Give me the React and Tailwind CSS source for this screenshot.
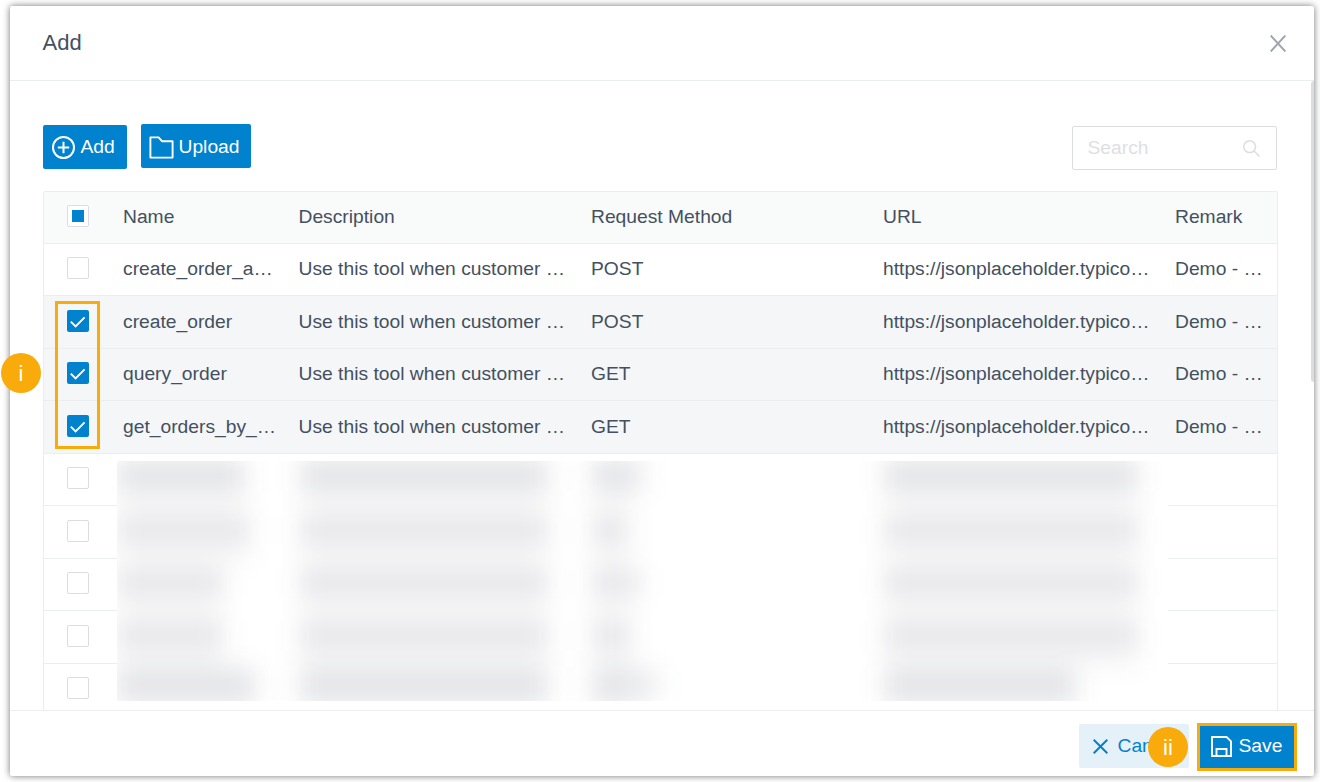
const columns = ["Name", "Description", "Request Method", "URL", "Remark"];

const tools = [
  { name: "create_order_a…", method: "POST", checked: false },
  { name: "create_order", method: "POST", checked: true },
  { name: "query_order", method: "GET", checked: true },
  { name: "get_orders_by_…", method: "GET", checked: true },
];

const description = "Use this tool when customer …";
const url = "https://jsonplaceholder.typico…";
const remark = "Demo - …";

// widths of the redacted name, method and url cells
const redacted = [
  [128, 52, 254],
  [132, 34, 254],
  [106, 50, 254],
  [106, 38, 254],
  [138, 66, 192],
];

const gridCols = "grid grid-cols-[65px_175.5px_292.5px_292px_292px_1fr]";
const rowSize = "odd:h-[52px] odd:pb-[3px] even:h-[53px] even:pb-[2px]";

function Checkbox({ state }) {
  if (state === "checked") {
    return (
      <span className="flex size-[22px] items-center justify-center rounded-[2px] bg-[#0082cf]">
        <svg viewBox="0 0 22 22" className="size-[22px]" fill="none" stroke="#fff" strokeWidth="1.9">
          <path d="M3.8 11.6 8.6 16.4 17.6 7.4" />
        </svg>
      </span>
    );
  }
  return (
    <span className="flex size-[22px] items-center justify-center rounded-[2px] border border-[#dcdde1] bg-white">
      {state === "partial" && <span className="size-3 bg-[#0082cf]" />}
    </span>
  );
}

function Row({ cells, state, className }) {
  return (
    <div className={`${gridCols} items-center border-b border-[#ebeeef] ${className}`}>
      <div className="pl-[23px]">
        <Checkbox state={state} />
      </div>
      {cells.map((cell, i) => (
        <div key={i} className="pt-0.5 pl-[14px] leading-6 whitespace-nowrap">
          {cell}
        </div>
      ))}
    </div>
  );
}

function Redaction() {
  return (
    <div className="absolute top-[269px] left-[73px] h-60 w-[1051px] overflow-hidden bg-white">
      <div className="-mt-1.5 blur-[12px]">
        {redacted.map(([name, method, link], i) => {
          const bar = i === 0 || i === 4 ? "h-[33px] bg-[#31374a]/9" : "mt-1.5 h-[27px] bg-[#31374a]/8";
          return (
            <div key={i} className="grid h-[52.5px] grid-cols-[183px_292px_292px_1fr] items-start pt-[3px]">
              <div className="flow-root h-[52.5px] bg-[#31374a]/4" style={{ width: name }}>
                <div className={bar} />
              </div>
              <div className="flow-root h-[52.5px] w-[248px] bg-[#31374a]/4">
                <div className={bar} />
              </div>
              <div className="flow-root h-[52.5px] w-10 bg-[#31374a]/4">
                <div className={bar} style={{ width: method }} />
              </div>
              <div className="flow-root h-[52.5px] bg-[#31374a]/4" style={{ width: link }}>
                <div className={bar} />
              </div>
            </div>
          );
        })}
      </div>
    </div>
  );
}

function Step({ children, className }) {
  return (
    <span
      className={`absolute flex size-10 items-center justify-center rounded-full bg-[#f9ab0b] text-[22px] text-white ${className}`}
    >
      {children}
    </span>
  );
}

export default function App() {
  return (
    <div className="h-[782px] w-[1320px] overflow-hidden bg-white pt-1.5 pl-2.5 font-['Liberation_Sans',Arial,sans-serif] text-[19.25px] text-[#445060]">
      <div className="relative flex h-[770px] w-[1304px] flex-col rounded-[2px] bg-white shadow-[0_0_7px_rgba(0,0,0,0.55)]">
        <header className="flex h-[75px] shrink-0 items-center justify-between border-b border-[#ebeeef] pr-7 pl-[32.5px]">
          <h1 className="pb-0.5 text-[22px]">Add</h1>
          <svg viewBox="0 0 16 17" className="mt-px h-[17px] w-4" fill="none" stroke="#9ea5ad" strokeWidth="1.9">
            <path d="M.7.5 15.3 16.5M15.3.5.7 16.5" />
          </svg>
        </header>

        <main className="relative h-[629px] shrink-0 overflow-hidden pt-[43px] pr-[37px] pl-[33px]">
          <div className="flex h-[67px] items-start justify-between">
            <div className="flex gap-3.5">
              <button className="mt-px flex h-11 w-[84px] items-center rounded-[2px] bg-[#0082cf] pl-[9px] text-white">
                <svg viewBox="0 0 23 23" className="mt-px mr-[5.5px] size-[23px]" fill="none" stroke="#fff" strokeWidth="2">
                  <circle cx="11.5" cy="11.5" r="10.5" />
                  <path d="M11.5 5.8v11.4M5.8 11.5h11.4" />
                </svg>
                Add
              </button>
              <button className="flex h-11 w-[110px] items-center rounded-[2px] bg-[#0082cf] pt-0.5 pl-2 text-white">
                <svg viewBox="0 0 25 23" className="mr-[4.5px] h-[23px] w-[25px]" fill="none" stroke="#fff" strokeWidth="1.9">
                  <path d="M1.4 1.4h8.2l3.4 3.8h10.6v16.4H1.4z" strokeLinejoin="round" />
                </svg>
                Upload
              </button>
            </div>
            <div className="mt-0.5 flex h-11 w-[205px] items-center justify-between rounded-[2px] border border-[#dcdde1] pr-4 pl-[14.5px] text-[#dedfe3]">
              Search
              <svg viewBox="0 0 17 17" className="size-[17px]" fill="none" stroke="#dcdde1" strokeWidth="1.5">
                <circle cx="6.7" cy="6.7" r="5.9" />
                <path d="m11 11 5.6 5.4" />
              </svg>
            </div>
          </div>

          <div className="relative w-[1235px] rounded-[2px] border border-[#ebeeef]">
            <Row cells={columns} state="partial" className="h-[52px] bg-[#f9fafa] pb-[3px]" />
            <div>
              {tools.map((tool) => (
                <Row
                  key={tool.name}
                  cells={[tool.name, description, tool.method, url, remark]}
                  state={tool.checked ? "checked" : "empty"}
                  className={`${rowSize} ${tool.checked ? "bg-[#f4f6f8]" : ""}`}
                />
              ))}
              {redacted.map((_, i) => (
                <Row key={i} cells={[]} state="empty" className={rowSize} />
              ))}
            </div>
            <Redaction />
            <div className="absolute top-[109px] left-[11px] h-[148px] w-[45px] border-3 border-[#f9ab0b]" />
          </div>

          <div className="absolute top-0 right-0 h-[301px] w-[3px] rounded-l-full bg-[#dcdde1]" />
        </main>

        <footer className="relative flex h-[66px] items-start justify-end border-t border-[#ebeeef] pt-3 pr-[17px]">
          <button className="mt-px mr-2 flex h-11 w-[110px] items-center rounded-[2px] bg-[#e5f1f9] pl-3.5 text-[#0082cf]">
            <svg viewBox="0 0 15 15" className="mt-px mr-[9.5px] size-[15px]" fill="none" stroke="#0082cf" strokeWidth="2">
              <path d="m.7.7 13.6 13.6M14.3.7.7 14.3" />
            </svg>
            Cancel
          </button>
          <button className="flex h-12 w-[100px] items-center border-3 border-[#f9ab0b] bg-[#0082cf] pb-0.5 pl-[11px] text-white">
            <svg viewBox="0 0 21 21" className="mr-[6.5px] size-[21px]" fill="none" stroke="#fff" strokeWidth="1.9">
              <path d="M1 1h14.6L20 5.4V20H1zM5.5 20v-7h10v7" />
            </svg>
            Save
          </button>
          <Step className="top-4 left-[1138px]">ii</Step>
        </footer>

        <Step className="top-[347px] -left-[9px]">i</Step>
      </div>
    </div>
  );
}
